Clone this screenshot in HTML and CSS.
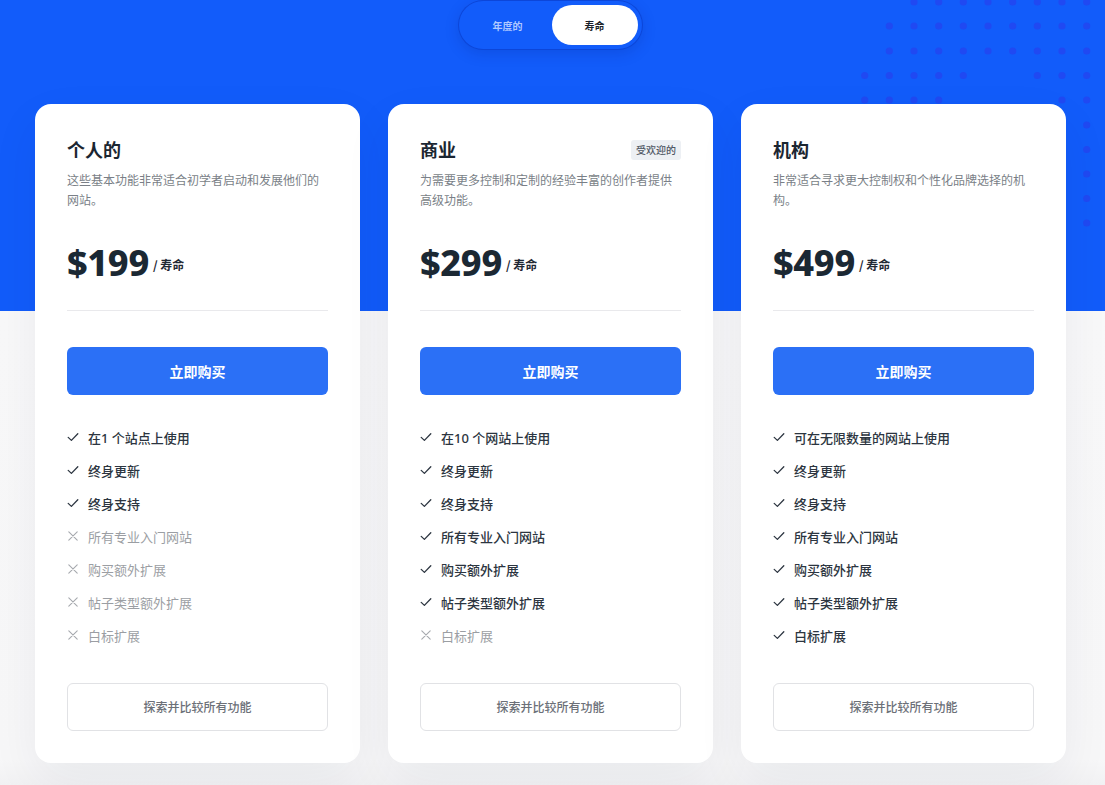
FILE: index.html
```html
<!DOCTYPE html>
<html lang="zh-CN">
<head>
<meta charset="utf-8">
<title>Pricing</title>
<link rel="stylesheet" href="styles.css">
</head>
<body>
<div class="page">
  <svg class="dots" width="1105" height="240" viewBox="0 0 1105 240" aria-hidden="true">
    <g fill="#2049f2">
      <circle cx="914" cy="2" r="3.6"/><circle cx="938.7" cy="2" r="3.6"/><circle cx="963.3" cy="2" r="3.6"/><circle cx="988" cy="2" r="3.6"/><circle cx="1012.7" cy="2" r="3.6"/><circle cx="1037.3" cy="2" r="3.6"/><circle cx="1062" cy="2" r="3.6"/><circle cx="1086.7" cy="2" r="3.6"/>
      <circle cx="889.3" cy="26" r="3.6"/><circle cx="914" cy="26" r="3.6"/><circle cx="938.7" cy="26" r="3.6"/><circle cx="963.3" cy="26" r="3.6"/><circle cx="988" cy="26" r="3.6"/><circle cx="1012.7" cy="26" r="3.6"/><circle cx="1037.3" cy="26" r="3.6"/><circle cx="1062" cy="26" r="3.6"/><circle cx="1086.7" cy="26" r="3.6"/>
      <circle cx="889.3" cy="51" r="3.6"/><circle cx="914" cy="51" r="3.6"/><circle cx="938.7" cy="51" r="3.6"/><circle cx="963.3" cy="51" r="3.6"/><circle cx="988" cy="51" r="3.6"/><circle cx="1012.7" cy="51" r="3.6"/><circle cx="1037.3" cy="51" r="3.6"/><circle cx="1062" cy="51" r="3.6"/><circle cx="1086.7" cy="51" r="3.6"/>
      <circle cx="864.7" cy="75.5" r="3.6"/><circle cx="889.3" cy="75.5" r="3.6"/><circle cx="914" cy="75.5" r="3.6"/><circle cx="938.7" cy="75.5" r="3.6"/><circle cx="963.3" cy="75.5" r="3.6"/><circle cx="1037.3" cy="75.5" r="3.6"/><circle cx="1062" cy="75.5" r="3.6"/><circle cx="1086.7" cy="75.5" r="3.6"/>
      <circle cx="864.7" cy="100" r="3.6"/><circle cx="889.3" cy="100" r="3.6"/><circle cx="914" cy="100" r="3.6"/><circle cx="938.7" cy="100" r="3.6"/><circle cx="1062" cy="100" r="3.6"/><circle cx="1086.7" cy="100" r="3.6"/>
      <circle cx="1086.7" cy="125" r="3.6"/><circle cx="1086.7" cy="149.5" r="3.6"/><circle cx="1086.7" cy="174" r="3.6"/><circle cx="1086.7" cy="198.5" r="3.6"/><circle cx="1086.7" cy="223" r="3.6"/>
    </g>
  </svg>

  <div class="wrap">
    <div class="toggle">
      <span class="toggle-opt">年度的</span>
      <span class="toggle-opt active">寿命</span>
    </div>

    <div class="cards">
      <div class="card">
        <div class="card-head">
          <h2 class="card-title">个人的</h2>
        </div>
        <p class="card-desc">这些基本功能非常适合初学者启动和发展他们的网站。</p>
        <div class="price"><span class="amount">$199</span><span class="per">/ 寿命</span></div>
        <div class="divider"></div>
        <a class="buy">立即购买</a>
        <ul class="features">
          <li class="yes"><svg class="ic" viewBox="0 0 12 12"><path d="M1.2 6.4 L4.4 9.4 L10.8 2.8"/></svg>在1 个站点上使用</li>
          <li class="yes"><svg class="ic" viewBox="0 0 12 12"><path d="M1.2 6.4 L4.4 9.4 L10.8 2.8"/></svg>终身更新</li>
          <li class="yes"><svg class="ic" viewBox="0 0 12 12"><path d="M1.2 6.4 L4.4 9.4 L10.8 2.8"/></svg>终身支持</li>
          <li class="no"><svg class="ic" viewBox="0 0 12 12"><path d="M1.8 1.8 L10.2 10.2 M10.2 1.8 L1.8 10.2"/></svg>所有专业入门网站</li>
          <li class="no"><svg class="ic" viewBox="0 0 12 12"><path d="M1.8 1.8 L10.2 10.2 M10.2 1.8 L1.8 10.2"/></svg>购买额外扩展</li>
          <li class="no"><svg class="ic" viewBox="0 0 12 12"><path d="M1.8 1.8 L10.2 10.2 M10.2 1.8 L1.8 10.2"/></svg>帖子类型额外扩展</li>
          <li class="no"><svg class="ic" viewBox="0 0 12 12"><path d="M1.8 1.8 L10.2 10.2 M10.2 1.8 L1.8 10.2"/></svg>白标扩展</li>
        </ul>
        <a class="explore">探索并比较所有功能</a>
      </div>

      <div class="card">
        <div class="card-head">
          <h2 class="card-title">商业</h2>
          <span class="badge">受欢迎的</span>
        </div>
        <p class="card-desc">为需要更多控制和定制的经验丰富的创作者提供高级功能。</p>
        <div class="price"><span class="amount">$299</span><span class="per">/ 寿命</span></div>
        <div class="divider"></div>
        <a class="buy">立即购买</a>
        <ul class="features">
          <li class="yes"><svg class="ic" viewBox="0 0 12 12"><path d="M1.2 6.4 L4.4 9.4 L10.8 2.8"/></svg>在10 个网站上使用</li>
          <li class="yes"><svg class="ic" viewBox="0 0 12 12"><path d="M1.2 6.4 L4.4 9.4 L10.8 2.8"/></svg>终身更新</li>
          <li class="yes"><svg class="ic" viewBox="0 0 12 12"><path d="M1.2 6.4 L4.4 9.4 L10.8 2.8"/></svg>终身支持</li>
          <li class="yes"><svg class="ic" viewBox="0 0 12 12"><path d="M1.2 6.4 L4.4 9.4 L10.8 2.8"/></svg>所有专业入门网站</li>
          <li class="yes"><svg class="ic" viewBox="0 0 12 12"><path d="M1.2 6.4 L4.4 9.4 L10.8 2.8"/></svg>购买额外扩展</li>
          <li class="yes"><svg class="ic" viewBox="0 0 12 12"><path d="M1.2 6.4 L4.4 9.4 L10.8 2.8"/></svg>帖子类型额外扩展</li>
          <li class="no"><svg class="ic" viewBox="0 0 12 12"><path d="M1.8 1.8 L10.2 10.2 M10.2 1.8 L1.8 10.2"/></svg>白标扩展</li>
        </ul>
        <a class="explore">探索并比较所有功能</a>
      </div>

      <div class="card">
        <div class="card-head">
          <h2 class="card-title">机构</h2>
        </div>
        <p class="card-desc">非常适合寻求更大控制权和个性化品牌选择的机构。</p>
        <div class="price"><span class="amount">$499</span><span class="per">/ 寿命</span></div>
        <div class="divider"></div>
        <a class="buy">立即购买</a>
        <ul class="features">
          <li class="yes"><svg class="ic" viewBox="0 0 12 12"><path d="M1.2 6.4 L4.4 9.4 L10.8 2.8"/></svg>可在无限数量的网站上使用</li>
          <li class="yes"><svg class="ic" viewBox="0 0 12 12"><path d="M1.2 6.4 L4.4 9.4 L10.8 2.8"/></svg>终身更新</li>
          <li class="yes"><svg class="ic" viewBox="0 0 12 12"><path d="M1.2 6.4 L4.4 9.4 L10.8 2.8"/></svg>终身支持</li>
          <li class="yes"><svg class="ic" viewBox="0 0 12 12"><path d="M1.2 6.4 L4.4 9.4 L10.8 2.8"/></svg>所有专业入门网站</li>
          <li class="yes"><svg class="ic" viewBox="0 0 12 12"><path d="M1.2 6.4 L4.4 9.4 L10.8 2.8"/></svg>购买额外扩展</li>
          <li class="yes"><svg class="ic" viewBox="0 0 12 12"><path d="M1.2 6.4 L4.4 9.4 L10.8 2.8"/></svg>帖子类型额外扩展</li>
          <li class="yes"><svg class="ic" viewBox="0 0 12 12"><path d="M1.2 6.4 L4.4 9.4 L10.8 2.8"/></svg>白标扩展</li>
        </ul>
        <a class="explore">探索并比较所有功能</a>
      </div>
    </div>
  </div>
</div>
</body>
</html>
```

FILE: styles.css
```css
* { box-sizing: border-box; }

html, body {
  margin: 0;
  padding: 0;
}

body {
  font-family: "Noto Sans", "Noto Sans CJK SC", sans-serif;
  background: #f6f6f7;
  color: #1f2a36;
}

.page {
  position: relative;
  min-height: 785px;
  overflow: hidden;
  background: linear-gradient(to bottom, #125cfa 0, #125cfa 311px, #f8f8f9 311px, #f7f7f8 760px, #f1f1f3 785px);
}

.dots {
  position: absolute;
  top: 0;
  left: 0;
  z-index: 0;
}

.wrap {
  position: relative;
  z-index: 1;
  width: 1031px;
  margin-left: 35px;
  display: flex;
  flex-direction: column;
  align-items: center;
}

.toggle {
  display: flex;
  height: 50px;
  padding: 4px;
  margin-left: -1px;
  border: 1px solid rgba(8, 52, 190, 0.55);
  border-radius: 25px;
  box-shadow: 0 4px 14px rgba(0, 30, 130, 0.18);
  background: #125cfa;
}

.toggle-opt {
  width: 86px;
  height: 40px;
  border-radius: 20px;
  display: flex;
  align-items: center;
  justify-content: center;
  font-family: "Noto Sans CJK SC", sans-serif;
  font-size: 10px;
  font-weight: 700;
  color: #b0c8ff;
}

.toggle-opt:first-child {
  padding-left: 4px;
}

.toggle-opt.active {
  background: #ffffff;
  color: #1a1f29;
  margin-left: 3px;
  padding-left: 0;
}

.cards {
  margin-top: 54px;
  display: grid;
  grid-template-columns: repeat(3, 325px);
  gap: 28px;
}

.card {
  background: #ffffff;
  border-radius: 16px;
  padding: 31px 32px 32px;
  box-shadow: 0 18px 50px rgba(25, 35, 70, 0.06);
  display: flex;
  flex-direction: column;
}

.card-head {
  display: flex;
  align-items: center;
  justify-content: space-between;
  height: 28px;
}

.card-title {
  margin: 0;
  font-family: "Noto Sans CJK SC", sans-serif;
  font-size: 18px;
  line-height: 26px;
  font-weight: 700;
  color: #1b2631;
}

.badge {
  background: #edf0f4;
  color: #4d5663;
  font-family: "Noto Sans CJK SC", sans-serif;
  font-size: 10px;
  line-height: 20px;
  padding: 0 5px;
  border-radius: 3px;
  font-weight: 500;
  margin-top: 1px;
}

.card-desc {
  margin: 7px 0 0;
  font-family: "Noto Sans CJK SC", sans-serif;
  font-size: 12px;
  line-height: 20px;
  color: #7a7f87;
  height: 40px;
}

.price {
  margin-top: 31px;
  display: flex;
  align-items: center;
  height: 44px;
}

.amount {
  font-family: "Noto Sans", sans-serif;
  font-size: 36px;
  line-height: 44px;
  font-weight: 800;
  color: #1b2833;
  letter-spacing: -0.3px;
}

.per {
  margin-left: 4px;
  margin-top: 2px;
  font-family: "Noto Sans CJK SC", sans-serif;
  font-size: 12px;
  font-weight: 700;
  color: #1f2833;
}

.divider {
  margin-top: 25px;
  height: 1px;
  background: #e9e9ec;
}

.buy {
  margin-top: 36px;
  height: 48px;
  border-radius: 6px;
  background: #2b70f6;
  color: #ffffff;
  display: flex;
  align-items: center;
  justify-content: center;
  font-family: "Noto Sans CJK SC", sans-serif;
  font-size: 14px;
  font-weight: 700;
  padding-bottom: 1px;
}

.features {
  list-style: none;
  margin: 32px 0 0;
  padding: 0;
  display: flex;
  flex-direction: column;
  gap: 13px;
}

.features li {
  display: flex;
  align-items: center;
  height: 20px;
  font-family: "Noto Sans", "Noto Sans CJK SC", sans-serif;
  font-size: 13px;
}

.features li.yes {
  color: #2c3540;
  font-weight: 500;
}

.features li.no {
  color: #9b9ea3;
  font-weight: 400;
}

.ic {
  width: 12px;
  height: 12px;
  margin-right: 9px;
  fill: none;
  stroke-width: 1.3;
  stroke-linecap: round;
  stroke-linejoin: round;
  flex: none;
}

.yes .ic { stroke: #2c3540; }
.no .ic { stroke: #a6a9ae; stroke-width: 1.1; }

.explore {
  margin-top: 38px;
  height: 48px;
  border: 1px solid #e1e2e5;
  border-radius: 6px;
  display: flex;
  align-items: center;
  justify-content: center;
  font-family: "Noto Sans CJK SC", sans-serif;
  font-size: 12px;
  font-weight: 500;
  color: #6c7078;
  padding-bottom: 2px;
}
```
